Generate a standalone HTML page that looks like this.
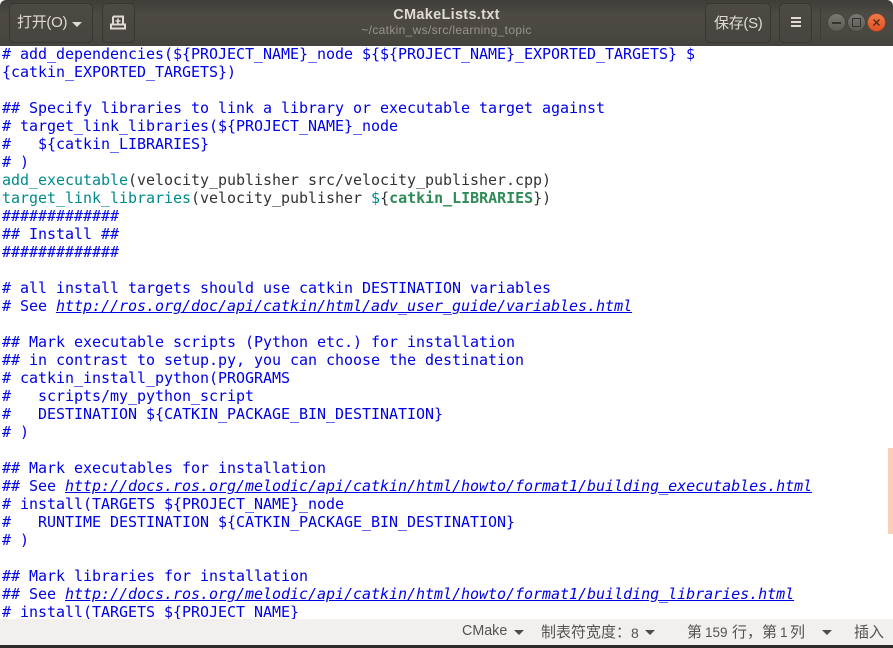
<!DOCTYPE html>
<html><head><meta charset="utf-8">
<style>
html,body{margin:0;padding:0;background:#fff}
#w{position:relative;width:893px;height:648px;overflow:hidden;background:#fff;font-family:"Liberation Sans","Noto Sans CJK SC",sans-serif}
#h{position:absolute;left:0;top:0;width:893px;height:46px;background:linear-gradient(#3f3d38,#4c4a43 30%,#4a4841 70%,#45433d);border-radius:6px 6px 0 0}
.b{position:absolute;top:3px;height:38px;border:1px solid #373630;border-radius:5px;background:linear-gradient(#4c4a43,#47453f);box-sizing:content-box}
.t{position:absolute;color:#dfdbd2;font-size:15px;white-space:pre;line-height:18px}
#c{position:absolute;left:2px;top:45px;margin:0;font:15px/18px "DejaVu Sans Mono","Liberation Mono",monospace;letter-spacing:-0.03px;color:#0000e6;white-space:pre;height:574px;overflow:hidden;width:890px}
.g{color:#008a8a}.k{color:#333}.d{color:#2e8b57;font-weight:bold}
.u{font-style:italic;text-decoration:underline}
#s{position:absolute;left:0;top:619px;width:893px;height:26px;background:#f1f0ee}
#e{position:absolute;left:0;top:645px;width:893px;height:3px;background:#2c2b28}
.st{position:absolute;top:5px;font-size:15px;line-height:18px;color:#55534e;white-space:pre}
.a{position:absolute;top:630px;width:0;height:0;border-left:5px solid transparent;border-right:5px solid transparent;border-top:5px solid #4e4d49}
.wb{position:absolute;top:14px;width:17px;height:17px;border-radius:50%;background:linear-gradient(#7a7872,#5c5a54);box-shadow:0 0 0 .5px #3d3c37}
</style></head><body><div id="w">
<pre id="c"># add_dependencies(${PROJECT_NAME}_node ${${PROJECT_NAME}_EXPORTED_TARGETS} $
{catkin_EXPORTED_TARGETS})

## Specify libraries to link a library or executable target against
# target_link_libraries(${PROJECT_NAME}_node
#   ${catkin_LIBRARIES}
# )
<span class="g">add_executable</span><span class="k">(velocity_publisher src/velocity_publisher.cpp)</span>
<span class="g">target_link_libraries</span><span class="k">(velocity_publisher </span><span class="g">$</span><span class="k">{</span><span class="d">catkin_LIBRARIES</span><span class="k">})</span>
#############
## Install ##
#############

# all install targets should use catkin DESTINATION variables
# See <span class="u">http://ros.org/doc/api/catkin/html/adv_user_guide/variables.html</span>

## Mark executable scripts (Python etc.) for installation
## in contrast to setup.py, you can choose the destination
# catkin_install_python(PROGRAMS
#   scripts/my_python_script
#   DESTINATION ${CATKIN_PACKAGE_BIN_DESTINATION}
# )

## Mark executables for installation
## See <span class="u">http://docs.ros.org/melodic/api/catkin/html/howto/format1/building_executables.html</span>
# install(TARGETS ${PROJECT_NAME}_node
#   RUNTIME DESTINATION ${CATKIN_PACKAGE_BIN_DESTINATION}
# )

## Mark libraries for installation
## See <span class="u">http://docs.ros.org/melodic/api/catkin/html/howto/format1/building_libraries.html</span>
# install(TARGETS ${PROJECT_NAME}
</pre>
<div id="h">
<div class="b" style="left:9px;width:82px"></div>
<div class="t" style="left:17px;top:14px;font-size:15px;letter-spacing:-.3px">打开(O)</div>
<div style="position:absolute;left:72px;top:22px;width:0;height:0;border-left:5px solid transparent;border-right:5px solid transparent;border-top:5px solid #dfdbd2"></div>
<div class="b" style="left:102px;width:31px"></div>
<svg style="position:absolute;left:110px;top:15px" width="16" height="16" viewBox="0 0 16 16"><path d="M3 1.500h10v8M3 1.500v8M1 13.500h14v-4h-14z" fill="none" stroke="#dfdbd2" stroke-width="2"/><path d="M8 3.500v5M5.500 6h5" stroke="#dfdbd2" stroke-width="1.600"/></svg>
<div class="t" style="left:0;width:893px;text-align:center;top:6px;font-size:14.5px;font-weight:bold;color:#dfdbd2;letter-spacing:.3px">CMakeLists.txt</div>
<div class="t" style="left:0;width:893px;text-align:center;top:22px;font-size:12px;color:#96948c;line-height:16px;letter-spacing:.33px">~/catkin_ws/src/learning_topic</div>
<div class="b" style="left:705px;width:64px"></div>
<div class="t" style="left:714px;top:15px;letter-spacing:-.3px">保存(S)</div>
<div class="b" style="left:779px;width:31px"></div>
<div style="position:absolute;left:791px;top:17px;width:10px;height:2px;background:#dfdbd2;box-shadow:0 4px 0 #dfdbd2,0 8px 0 #dfdbd2"></div>
<div style="position:absolute;left:820px;top:6px;width:1px;height:33px;background:#3e3c37"></div>
<div class="wb" style="left:828px"></div>
<div style="position:absolute;left:832px;top:22px;width:9px;height:1.500px;background:#34332e"></div>
<div class="wb" style="left:848px"></div>
<div style="position:absolute;left:852px;top:18px;width:7px;height:7px;border:1px solid #34332e"></div>
<div class="wb" style="left:868px;background:linear-gradient(#f0794a,#e4501f);box-shadow:0 0 0 .5px #b9481f"></div>
<svg style="position:absolute;left:872px;top:18px" width="9" height="9" viewBox="0 0 9 9"><path d="M1.500 1.500l6 6M7.500 1.500l-6 6" stroke="#4a2a1a" stroke-width="1.300"/></svg>
</div>
<div style="position:absolute;left:888px;top:448px;width:5px;height:86px;background:#fbceb8"></div>
<div id="s">
<div class="st" style="left:462px;top:3px;font-size:14.3px">CMake</div>
<div class="st" style="left:541px">制表符宽度：</div>
<div class="st" style="left:631px;font-size:14px">8</div>
<div class="st" style="left:687px">第</div>
<div class="st" style="left:705px;font-size:13.500px">159</div>
<div class="st" style="left:732px">行，</div>
<div class="st" style="left:762px">第</div>
<div class="st" style="left:780px;font-size:13.500px">1</div>
<div class="st" style="left:790px">列</div>
<div class="st" style="left:854px">插入</div>
</div>
<div class="a" style="left:514px"></div>
<div class="a" style="left:645px"></div>
<div class="a" style="left:822px"></div>
<div id="e"></div>
</div></body></html>
